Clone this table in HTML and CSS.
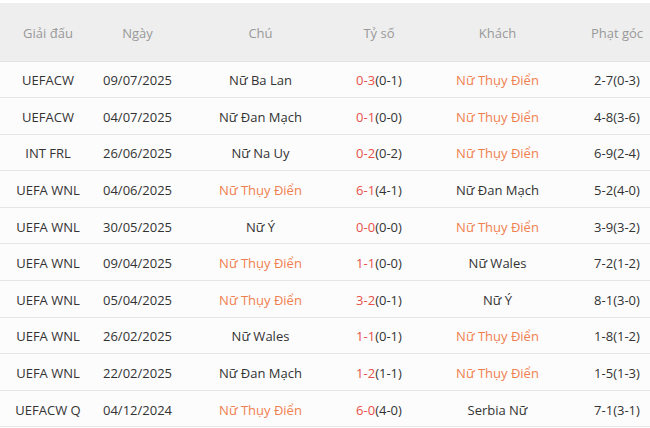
FILE: index.html
```html
<!DOCTYPE html>
<html lang="vi">
<head>
<meta charset="utf-8">
<link rel="stylesheet" href="styles.css">
</head>
<body>
<table class="matches">
  <colgroup>
    <col class="c1"><col class="c2"><col class="c3"><col class="c4"><col class="c5"><col class="c6">
  </colgroup>
  <thead>
    <tr><th>Giải đấu</th><th>Ngày</th><th>Chú</th><th>Tỷ số</th><th>Khách</th><th class="last">Phạt góc</th></tr>
  </thead>
  <tbody>
    <tr><td>UEFACW</td><td>09/07/2025</td><td>Nữ Ba Lan</td><td><span class="sc">0-3</span>(0-1)</td><td class="hl">Nữ Thụy Điển</td><td class="last">2-7(0-3)</td></tr>
    <tr><td>UEFACW</td><td>04/07/2025</td><td>Nữ Đan Mạch</td><td><span class="sc">0-1</span>(0-0)</td><td class="hl">Nữ Thụy Điển</td><td class="last">4-8(3-6)</td></tr>
    <tr><td>INT FRL</td><td>26/06/2025</td><td>Nữ Na Uy</td><td><span class="sc">0-2</span>(0-2)</td><td class="hl">Nữ Thụy Điển</td><td class="last">6-9(2-4)</td></tr>
    <tr><td>UEFA WNL</td><td>04/06/2025</td><td class="hl">Nữ Thụy Điển</td><td><span class="sc">6-1</span>(4-1)</td><td>Nữ Đan Mạch</td><td class="last">5-2(4-0)</td></tr>
    <tr><td>UEFA WNL</td><td>30/05/2025</td><td>Nữ Ý</td><td><span class="sc">0-0</span>(0-0)</td><td class="hl">Nữ Thụy Điển</td><td class="last">3-9(3-2)</td></tr>
    <tr><td>UEFA WNL</td><td>09/04/2025</td><td class="hl">Nữ Thụy Điển</td><td><span class="sc">1-1</span>(0-0)</td><td>Nữ Wales</td><td class="last">7-2(1-2)</td></tr>
    <tr><td>UEFA WNL</td><td>05/04/2025</td><td class="hl">Nữ Thụy Điển</td><td><span class="sc">3-2</span>(0-1)</td><td>Nữ Ý</td><td class="last">8-1(3-0)</td></tr>
    <tr><td>UEFA WNL</td><td>26/02/2025</td><td>Nữ Wales</td><td><span class="sc">1-1</span>(0-1)</td><td class="hl">Nữ Thụy Điển</td><td class="last">1-8(1-2)</td></tr>
    <tr><td>UEFA WNL</td><td>22/02/2025</td><td>Nữ Đan Mạch</td><td><span class="sc">1-2</span>(1-1)</td><td class="hl">Nữ Thụy Điển</td><td class="last">1-5(1-3)</td></tr>
    <tr><td>UEFACW Q</td><td>04/12/2024</td><td class="hl">Nữ Thụy Điển</td><td><span class="sc">6-0</span>(4-0)</td><td>Serbia Nữ</td><td class="last">7-1(3-1)</td></tr>
  </tbody>
</table>
</body>
</html>
```
FILE: styles.css
```css
html, body {
  margin: 0;
  padding: 0;
  background: #ffffff;
}

body {
  padding-top: 3px;
  font-family: "Open Sans", "Liberation Sans", sans-serif;
  font-size: 13px;
  color: #333333;
}

.matches {
  width: 650px;
  border-collapse: collapse;
  table-layout: fixed;
}

.c1 { width: 96px; }
.c2 { width: 83px; }
.c3 { width: 163px; }
.c4 { width: 74px; }
.c5 { width: 163px; }
.c6 { width: 71px; }

.matches th {
  height: 58px;
  box-sizing: border-box;
  padding: 3px 0 0;
  background: #eeeeee;
  border-bottom: 1px solid #e2e2e2;
  color: #999999;
  font-weight: normal;
  text-align: center;
  vertical-align: middle;
}

.matches td {
  height: 36.6px;
  box-sizing: border-box;
  padding: 2px 0 0;
  background: #fcfcfc;
  border-bottom: 1px solid #e6e6e6;
  text-align: center;
  vertical-align: middle;
  white-space: nowrap;
}

.matches .last {
  padding-left: 5px;
}

.sc {
  color: #e8504a;
}

.hl {
  color: #f07f4f;
}
```
